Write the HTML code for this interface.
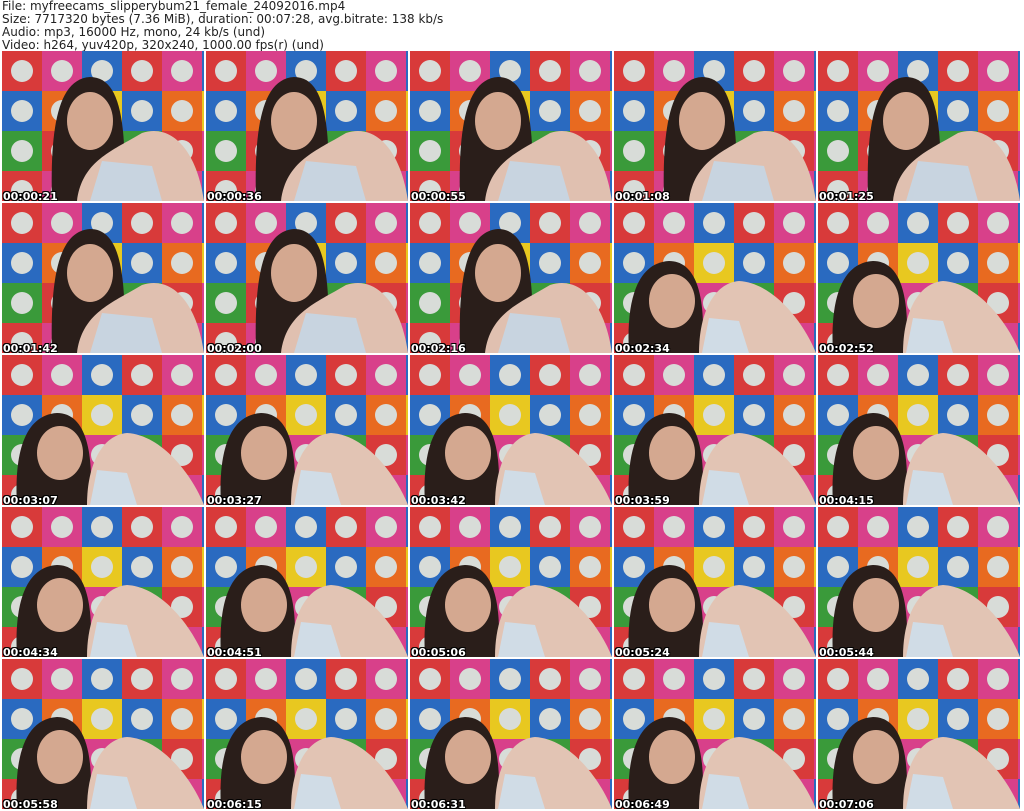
<!DOCTYPE html>
<html><head><meta charset="utf-8"><style>
body{margin:0;width:1024px;height:811px;background:#fff;overflow:hidden;position:relative;font-family:"DejaVu Sans","Liberation Sans",sans-serif}
.h{position:absolute;left:2px;top:0;font-size:12px;line-height:13px;color:#222;white-space:pre}
svg{position:absolute;left:0;top:0}
.t{position:absolute;font:bold 11px "DejaVu Sans",sans-serif;color:#fff;text-shadow:1px 1px 0 #000,-1px -1px 0 #000,1px -1px 0 #000,-1px 1px 0 #000}
</style></head><body>
<div class="h">File: myfreecams_slipperybum21_female_24092016.mp4
Size: 7717320 bytes (7.36 MiB), duration: 00:07:28, avg.bitrate: 138 kb/s
Audio: mp3, 16000 Hz, mono, 24 kb/s (und)
Video: h264, yuv420p, 320x240, 1000.00 fps(r) (und)</div>
<svg width="1024" height="811">
<defs>
<pattern id="p" width="120" height="120" patternUnits="userSpaceOnUse">
<rect width="120" height="120" fill="#2a5fb0"/>
<rect x="0" y="0" width="40" height="40" fill="#d83a3a"/>
<rect x="40" y="0" width="40" height="40" fill="#d8408a"/>
<rect x="80" y="0" width="40" height="40" fill="#2a6ac0"/>
<rect x="0" y="40" width="40" height="40" fill="#2a6ac0"/>
<rect x="40" y="40" width="40" height="40" fill="#e86a20"/>
<rect x="80" y="40" width="40" height="40" fill="#e8c820"/>
<rect x="0" y="80" width="40" height="40" fill="#3a9a3a"/>
<rect x="40" y="80" width="40" height="40" fill="#d83a3a"/>
<rect x="80" y="80" width="40" height="40" fill="#d8408a"/>
<g fill="#d8dcd8">
<circle cx="20" cy="20" r="11"/><circle cx="60" cy="20" r="11"/><circle cx="100" cy="20" r="11"/>
<circle cx="20" cy="60" r="11"/><circle cx="60" cy="60" r="11"/><circle cx="100" cy="60" r="11"/>
<circle cx="20" cy="100" r="11"/><circle cx="60" cy="100" r="11"/><circle cx="100" cy="100" r="11"/>
</g>
</pattern>
<g id="a">
<rect width="202" height="150" fill="url(#p)"/>
<path d="M50 150 C48 80 55 28 88 26 C118 26 125 70 122 150Z" fill="#2a1e1a"/>
<ellipse cx="88" cy="70" rx="23" ry="29" fill="#d4a890"/>
<path d="M75 150 C80 110 110 100 140 82 C170 72 195 100 202 150Z" fill="#e0c0b0"/>
<path d="M88 150 L100 110 L150 115 L160 150Z" fill="#c8d4e0"/>
</g>
<g id="b">
<rect width="202" height="150" fill="url(#p)"/>
<path d="M15 150 C12 100 22 60 55 58 C85 58 92 100 88 150Z" fill="#2a1e1a"/>
<ellipse cx="58" cy="98" rx="23" ry="27" fill="#d4a890"/>
<path d="M85 150 C85 110 100 80 125 78 C160 80 190 120 202 150Z" fill="#e2c4b4"/>
<path d="M88 150 L95 115 L125 118 L135 150Z" fill="#d0dce6"/>
</g>
</defs>
<use href="#a" x="2" y="51"/><use href="#a" x="206" y="51"/><use href="#a" x="410" y="51"/><use href="#a" x="614" y="51"/><use href="#a" x="818" y="51"/>
<use href="#a" x="2" y="203"/><use href="#a" x="206" y="203"/><use href="#a" x="410" y="203"/><use href="#b" x="614" y="203"/><use href="#b" x="818" y="203"/>
<use href="#b" x="2" y="355"/><use href="#b" x="206" y="355"/><use href="#b" x="410" y="355"/><use href="#b" x="614" y="355"/><use href="#b" x="818" y="355"/>
<use href="#b" x="2" y="507"/><use href="#b" x="206" y="507"/><use href="#b" x="410" y="507"/><use href="#b" x="614" y="507"/><use href="#b" x="818" y="507"/>
<use href="#b" x="2" y="659"/><use href="#b" x="206" y="659"/><use href="#b" x="410" y="659"/><use href="#b" x="614" y="659"/><use href="#b" x="818" y="659"/>
</svg>
<div class="t" style="left:3px;top:190px">00:00:21</div><div class="t" style="left:207px;top:190px">00:00:36</div><div class="t" style="left:411px;top:190px">00:00:55</div><div class="t" style="left:615px;top:190px">00:01:08</div><div class="t" style="left:819px;top:190px">00:01:25</div>
<div class="t" style="left:3px;top:342px">00:01:42</div><div class="t" style="left:207px;top:342px">00:02:00</div><div class="t" style="left:411px;top:342px">00:02:16</div><div class="t" style="left:615px;top:342px">00:02:34</div><div class="t" style="left:819px;top:342px">00:02:52</div>
<div class="t" style="left:3px;top:494px">00:03:07</div><div class="t" style="left:207px;top:494px">00:03:27</div><div class="t" style="left:411px;top:494px">00:03:42</div><div class="t" style="left:615px;top:494px">00:03:59</div><div class="t" style="left:819px;top:494px">00:04:15</div>
<div class="t" style="left:3px;top:646px">00:04:34</div><div class="t" style="left:207px;top:646px">00:04:51</div><div class="t" style="left:411px;top:646px">00:05:06</div><div class="t" style="left:615px;top:646px">00:05:24</div><div class="t" style="left:819px;top:646px">00:05:44</div>
<div class="t" style="left:3px;top:798px">00:05:58</div><div class="t" style="left:207px;top:798px">00:06:15</div><div class="t" style="left:411px;top:798px">00:06:31</div><div class="t" style="left:615px;top:798px">00:06:49</div><div class="t" style="left:819px;top:798px">00:07:06</div>
</body></html>
